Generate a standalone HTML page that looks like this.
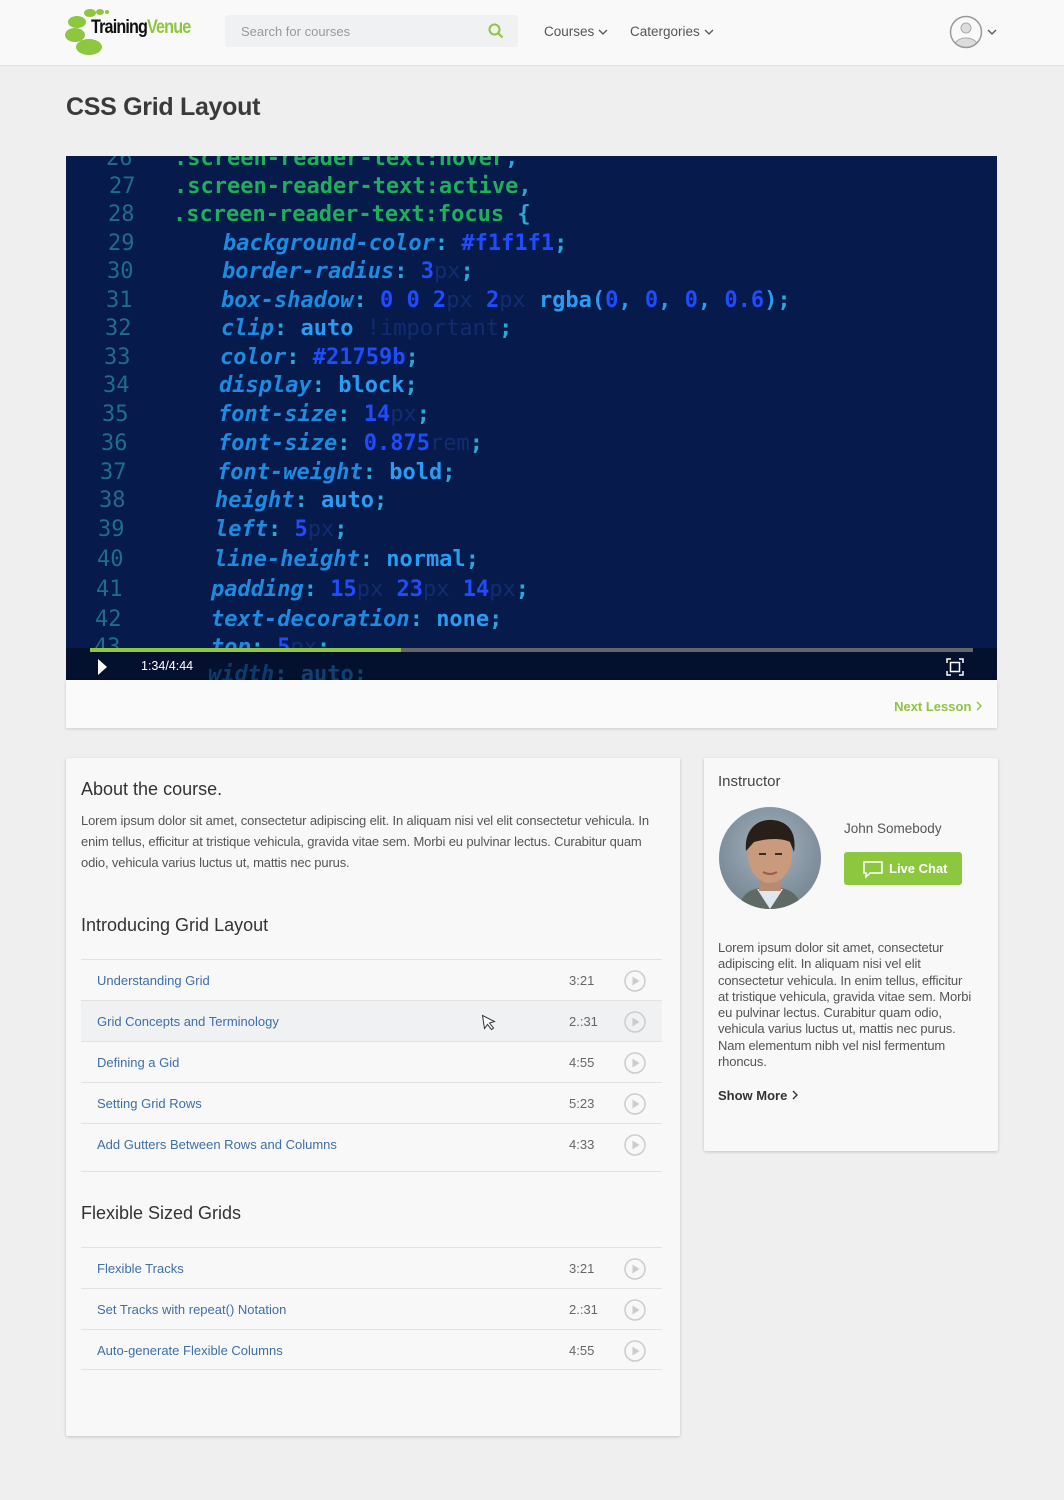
<!DOCTYPE html>
<html><head><meta charset="utf-8"><style>
*{box-sizing:border-box;margin:0;padding:0}
body{width:1064px;height:1500px;background:#efefef;font-family:"Liberation Sans",sans-serif;color:#444;position:relative;overflow:hidden}
.abs{position:absolute}
header{position:absolute;left:0;top:0;width:1064px;height:66px;background:#f9f9f9;border-bottom:1px solid #e2e2e2}
.search{left:225px;top:15px;width:293px;height:32px;background:#f0f1f2;border-radius:3px;font-size:13px;color:#999;padding:9px 16px}
.nav{font-size:13.5px;color:#555;top:24px}
h1{position:absolute;left:66px;top:93px;font-size:25px;font-weight:bold;color:#3a3a3a;letter-spacing:-0.3px}
.video{left:66px;top:156px;width:931px;height:524px;background:#061a4c;overflow:hidden}
.code{position:absolute;font-family:"DejaVu Sans Mono","Liberation Mono",monospace;font-size:22px;font-weight:bold;white-space:pre;line-height:28px}
.ln{color:#1f6e88;font-weight:normal}
.sel{color:#1fae5a}
.p{color:#1e8be0;font-style:italic}
.v{color:#2a9cf2;font-weight:bold}
.n{color:#1f4cff;font-weight:bold}
.u{color:#122c70;font-weight:normal}
.c{color:#2aa8d8}
.bar{left:0;top:492px;width:931px;height:32px;background:#03102e}
.below{left:66px;top:680px;width:931px;height:48px;background:#fafafa;box-shadow:0 1px 3px rgba(0,0,0,.15)}
.card{background:#f8f8f8;box-shadow:0 1px 3px rgba(0,0,0,.18);border-radius:2px}
h2{font-size:18px;font-weight:normal;color:#333;position:absolute}
.txt{font-size:13px;color:#555;letter-spacing:-0.15px}
.row{position:absolute;left:15px;width:581px;height:41px;border-top:1px solid #e2e2e2;font-size:13px;color:#3d6fa8}
.row .t{position:absolute;left:16px;top:13px}
.row .d{position:absolute;left:488px;top:13px;color:#666}
.row svg{position:absolute;left:543px;top:10px}
</style></head><body>
<header>
 <svg class="abs" style="left:64px;top:7px" width="50" height="48">
  <ellipse cx="25" cy="40" rx="13" ry="8" fill="#8dc63f"/>
  <ellipse cx="11" cy="28" rx="10" ry="7" fill="#8dc63f"/>
  <ellipse cx="13" cy="15" rx="9" ry="6" fill="#8dc63f"/>
  <ellipse cx="26" cy="6" rx="6" ry="4" fill="#8dc63f"/>
  <ellipse cx="36" cy="5" rx="4" ry="3" fill="#8dc63f"/>
  <ellipse cx="43" cy="5" rx="2" ry="2" fill="#8dc63f"/>
 </svg>
 <div class="abs" style="left:91px;top:17px;font-size:19px;font-weight:bold;letter-spacing:-1px;transform:scaleX(.85);transform-origin:left"><span style="color:#111">Training</span><span style="color:#8dc63f">Venue</span></div>
 <div class="abs search">Search for courses</div>
 <svg class="abs" style="left:488px;top:23px" width="16" height="16"><circle cx="6.5" cy="6.5" r="5" fill="none" stroke="#8dc63f" stroke-width="2"/><path d="M10 10l4.5 4.5" stroke="#8dc63f" stroke-width="2"/></svg>
 <div class="abs nav" style="left:544px">Courses <svg width="10" height="8"><path d="M1 2l4 4 4-4" fill="none" stroke="#555" stroke-width="1.3"/></svg></div>
 <div class="abs nav" style="left:630px">Catergories <svg width="10" height="8"><path d="M1 2l4 4 4-4" fill="none" stroke="#555" stroke-width="1.3"/></svg></div>
 <svg class="abs" style="left:949px;top:15px" width="52" height="34"><defs><clipPath id="cc"><circle cx="17" cy="17" r="15"/></clipPath></defs><g clip-path="url(#cc)"><circle cx="17" cy="13" r="5" fill="#ddd" stroke="#aaa"/><ellipse cx="17" cy="30" rx="11" ry="7" fill="#ddd" stroke="#aaa"/></g><circle cx="17" cy="17" r="15.5" fill="none" stroke="#999" stroke-width="1.5"/><path d="M39 15l4 4 4-4" fill="none" stroke="#555" stroke-width="1.3"/></svg>
</header>
<h1>CSS Grid Layout</h1>
<div class="abs video">
<div class="code" style="left:40px;top:-11px"><span class="ln">26</span></div><div class="code" style="left:108px;top:-11px"><span class="sel">.screen-reader-text:hover</span><span class="c">,</span></div>
<div class="code" style="left:43px;top:17px"><span class="ln">27</span></div><div class="code" style="left:108px;top:17px"><span class="sel">.screen-reader-text:active</span><span class="c">,</span></div>
<div class="code" style="left:42px;top:45px"><span class="ln">28</span></div><div class="code" style="left:107px;top:45px"><span class="sel">.screen-reader-text:focus</span> <span class="c">{</span></div>
<div class="code" style="left:42px;top:74px"><span class="ln">29</span></div><div class="code" style="left:157px;top:74px"><span class="p">background-color</span><span class="c">:</span> <span class="n">#f1f1f1</span><span class="c">;</span></div>
<div class="code" style="left:41px;top:102px"><span class="ln">30</span></div><div class="code" style="left:156px;top:102px"><span class="p">border-radius</span><span class="c">:</span> <span class="n">3</span><span class="u">px</span><span class="c">;</span></div>
<div class="code" style="left:40px;top:131px"><span class="ln">31</span></div><div class="code" style="left:155px;top:131px"><span class="p">box-shadow</span><span class="c">:</span> <span class="n">0 0 2</span><span class="u">px</span> <span class="n">2</span><span class="u">px</span> <span class="v">rgba(</span><span class="n">0</span><span class="v">,</span> <span class="n">0</span><span class="v">,</span> <span class="n">0</span><span class="v">,</span> <span class="n">0.6</span><span class="v">)</span><span class="c">;</span></div>
<div class="code" style="left:39px;top:159px"><span class="ln">32</span></div><div class="code" style="left:155px;top:159px"><span class="p">clip</span><span class="c">:</span> <span class="v">auto</span> <span class="u">!important</span><span class="c">;</span></div>
<div class="code" style="left:38px;top:188px"><span class="ln">33</span></div><div class="code" style="left:154px;top:188px"><span class="p">color</span><span class="c">:</span> <span class="n">#21759b</span><span class="c">;</span></div>
<div class="code" style="left:37px;top:216px"><span class="ln">34</span></div><div class="code" style="left:153px;top:216px"><span class="p">display</span><span class="c">:</span> <span class="v">block</span><span class="c">;</span></div>
<div class="code" style="left:36px;top:245px"><span class="ln">35</span></div><div class="code" style="left:152px;top:245px"><span class="p">font-size</span><span class="c">:</span> <span class="n">14</span><span class="u">px</span><span class="c">;</span></div>
<div class="code" style="left:35px;top:274px"><span class="ln">36</span></div><div class="code" style="left:152px;top:274px"><span class="p">font-size</span><span class="c">:</span> <span class="n">0.875</span><span class="u">rem</span><span class="c">;</span></div>
<div class="code" style="left:34px;top:303px"><span class="ln">37</span></div><div class="code" style="left:151px;top:303px"><span class="p">font-weight</span><span class="c">:</span> <span class="v">bold</span><span class="c">;</span></div>
<div class="code" style="left:33px;top:331px"><span class="ln">38</span></div><div class="code" style="left:149px;top:331px"><span class="p">height</span><span class="c">:</span> <span class="v">auto</span><span class="c">;</span></div>
<div class="code" style="left:32px;top:360px"><span class="ln">39</span></div><div class="code" style="left:149px;top:360px"><span class="p">left</span><span class="c">:</span> <span class="n">5</span><span class="u">px</span><span class="c">;</span></div>
<div class="code" style="left:31px;top:390px"><span class="ln">40</span></div><div class="code" style="left:148px;top:390px"><span class="p">line-height</span><span class="c">:</span> <span class="v">normal</span><span class="c">;</span></div>
<div class="code" style="left:30px;top:420px"><span class="ln">41</span></div><div class="code" style="left:145px;top:420px"><span class="p">padding</span><span class="c">:</span> <span class="n">15</span><span class="u">px</span> <span class="n">23</span><span class="u">px</span> <span class="n">14</span><span class="u">px</span><span class="c">;</span></div>
<div class="code" style="left:29px;top:450px"><span class="ln">42</span></div><div class="code" style="left:145px;top:450px"><span class="p">text-decoration</span><span class="c">:</span> <span class="v">none</span><span class="c">;</span></div>
<div class="code" style="left:28px;top:478px"><span class="ln">43</span></div><div class="code" style="left:145px;top:478px"><span class="p">top</span><span class="c">:</span> <span class="n">5</span><span class="u">px</span><span class="c">;</span></div>
<div class="abs bar"></div>
<div class="code" style="left:142px;top:505px;opacity:.35"><span class="p">width</span><span class="c">:</span> <span class="v">auto</span><span class="c">;</span></div>
<div class="abs" style="left:24px;top:492px;width:883px;height:4px;background:#666"></div>
<div class="abs" style="left:24px;top:492px;width:311px;height:4px;background:#8dc63f"></div>
<svg class="abs" style="left:31px;top:502px" width="12" height="18"><path d="M1 1l9 8-9 8z" fill="#fff"/></svg>
<div class="abs" style="left:75px;top:503px;font-size:12.5px;color:#fff">1:34/4:44</div>
<svg class="abs" style="left:880px;top:502px" width="18" height="18" fill="none" stroke="#fff" stroke-width="1.5"><path d="M1 5V1h4M13 1h4v4M17 13v4h-4M5 17H1v-4"/><rect x="4.5" y="4.5" width="9" height="9"/></svg>
</div>
<div class="abs below"><div class="abs" style="right:14px;top:19px;font-size:13px;font-weight:bold;color:#8dc63f">Next Lesson <svg width="8" height="10"><path d="M2 1l4 4-4 4" fill="none" stroke="#8dc63f" stroke-width="1.4"/></svg></div></div>

<div class="abs card" style="left:66px;top:758px;width:614px;height:678px">
 <h2 style="left:15px;top:21px">About the course.</h2>
 <div class="abs txt" style="left:15px;top:52px;line-height:21px;white-space:nowrap">Lorem ipsum dolor sit amet, consectetur adipiscing elit. In aliquam nisi vel elit consectetur vehicula. In<br>enim tellus, efficitur at tristique vehicula, gravida vitae sem. Morbi eu pulvinar lectus. Curabitur quam<br>odio, vehicula varius luctus ut, mattis nec purus.</div>
 <h2 style="left:15px;top:157px">Introducing Grid Layout</h2>
 <div class="row" style="top:201px"><span class="t">Understanding Grid</span><span class="d">3:21</span><svg width="22" height="22"><circle cx="11" cy="11" r="10" fill="none" stroke="#ccc" stroke-width="1.5"/><path d="M8.5 6.5v9l7-4.5z" fill="#ccc"/></svg></div>
 <div class="row" style="top:242px;background:#f0f1f2"><span class="t">Grid Concepts and Terminology</span><svg style="left:400px;top:13px" width="16" height="18"><path d="M1.5 1.5l12 6-5 1.5 4 5-2 1.5-4-5-3 4z" fill="#fff" stroke="#333" stroke-width="1"/></svg><span class="d">2.:31</span><svg width="22" height="22"><circle cx="11" cy="11" r="10" fill="none" stroke="#ccc" stroke-width="1.5"/><path d="M8.5 6.5v9l7-4.5z" fill="#ccc"/></svg></div>
 <div class="row" style="top:283px"><span class="t">Defining a Gid</span><span class="d">4:55</span><svg width="22" height="22"><circle cx="11" cy="11" r="10" fill="none" stroke="#ccc" stroke-width="1.5"/><path d="M8.5 6.5v9l7-4.5z" fill="#ccc"/></svg></div>
 <div class="row" style="top:324px"><span class="t">Setting Grid Rows</span><span class="d">5:23</span><svg width="22" height="22"><circle cx="11" cy="11" r="10" fill="none" stroke="#ccc" stroke-width="1.5"/><path d="M8.5 6.5v9l7-4.5z" fill="#ccc"/></svg></div>
 <div class="row" style="top:365px;height:49px;border-bottom:1px solid #e2e2e2"><span class="t">Add Gutters Between Rows and Columns</span><span class="d">4:33</span><svg width="22" height="22"><circle cx="11" cy="11" r="10" fill="none" stroke="#ccc" stroke-width="1.5"/><path d="M8.5 6.5v9l7-4.5z" fill="#ccc"/></svg></div>
 <h2 style="left:15px;top:445px">Flexible Sized Grids</h2>
 <div class="row" style="top:489px"><span class="t">Flexible Tracks</span><span class="d">3:21</span><svg width="22" height="22"><circle cx="11" cy="11" r="10" fill="none" stroke="#ccc" stroke-width="1.5"/><path d="M8.5 6.5v9l7-4.5z" fill="#ccc"/></svg></div>
 <div class="row" style="top:530px"><span class="t">Set Tracks with repeat() Notation</span><span class="d">2.:31</span><svg width="22" height="22"><circle cx="11" cy="11" r="10" fill="none" stroke="#ccc" stroke-width="1.5"/><path d="M8.5 6.5v9l7-4.5z" fill="#ccc"/></svg></div>
 <div class="row" style="top:571px;border-bottom:1px solid #e2e2e2"><span class="t">Auto-generate Flexible Columns</span><span class="d">4:55</span><svg width="22" height="22"><circle cx="11" cy="11" r="10" fill="none" stroke="#ccc" stroke-width="1.5"/><path d="M8.5 6.5v9l7-4.5z" fill="#ccc"/></svg></div>
</div>

<div class="abs card" style="left:704px;top:758px;width:294px;height:393px">
 <div class="abs" style="left:14px;top:15px;font-size:15px;color:#444">Instructor</div>
 <svg class="abs" style="left:15px;top:49px" width="102" height="102"><defs><clipPath id="ph"><circle cx="51" cy="51" r="51"/></clipPath><radialGradient id="bg" cx=".5" cy=".4" r=".7"><stop offset="0" stop-color="#a5b3bf"/><stop offset="1" stop-color="#6f7f8c"/></radialGradient></defs><g clip-path="url(#ph)"><rect width="102" height="102" fill="url(#bg)"/><path d="M20 102c2-18 16-22 31-22s29 4 31 22z" fill="#5f6a66"/><path d="M38 82l13 20 13-20z" fill="#dfe6ee"/><rect x="40" y="66" width="22" height="18" fill="#b88a70"/><ellipse cx="51" cy="48" rx="22" ry="28" fill="#c99a7c"/><path d="M27 44c-2-22 12-32 26-31 16 1 25 12 22 32l-4-10c-8-4-22-4-36 0z" fill="#2a1e18"/><path d="M40 47h7M56 47h7" stroke="#3a2a22" stroke-width="2"/><path d="M44 65q7 4 14 0" stroke="#9a5a50" stroke-width="2" fill="none"/></g></svg>
 <div class="abs" style="left:140px;top:63px;font-size:13.5px;color:#555">John Somebody</div>
 <div class="abs" style="left:140px;top:94px;width:118px;height:33px;background:#8dc63f;border-radius:3px;color:#fff;font-size:13px;font-weight:bold;padding:9px 0 0 45px">Live Chat</div>
 <svg class="abs" style="left:158px;top:102px" width="22" height="19" fill="none" stroke="#fff" stroke-width="1.5"><path d="M2 2h18v11H8l-4 4v-4H2z"/></svg>
 <div class="abs txt" style="left:14px;top:182px;line-height:16.3px;width:270px;white-space:nowrap">Lorem ipsum dolor sit amet, consectetur<br>adipiscing elit. In aliquam nisi vel elit<br>consectetur vehicula. In enim tellus, efficitur<br>at tristique vehicula, gravida vitae sem. Morbi<br>eu pulvinar lectus. Curabitur quam odio,<br>vehicula varius luctus ut, mattis nec purus.<br>Nam elementum nibh vel nisl fermentum<br>rhoncus.</div>
 <div class="abs" style="left:14px;top:330px;font-size:13px;font-weight:bold;color:#333">Show More <svg width="8" height="10"><path d="M2 1l4 4-4 4" fill="none" stroke="#333" stroke-width="1.4"/></svg></div>
</div>
</body></html>
